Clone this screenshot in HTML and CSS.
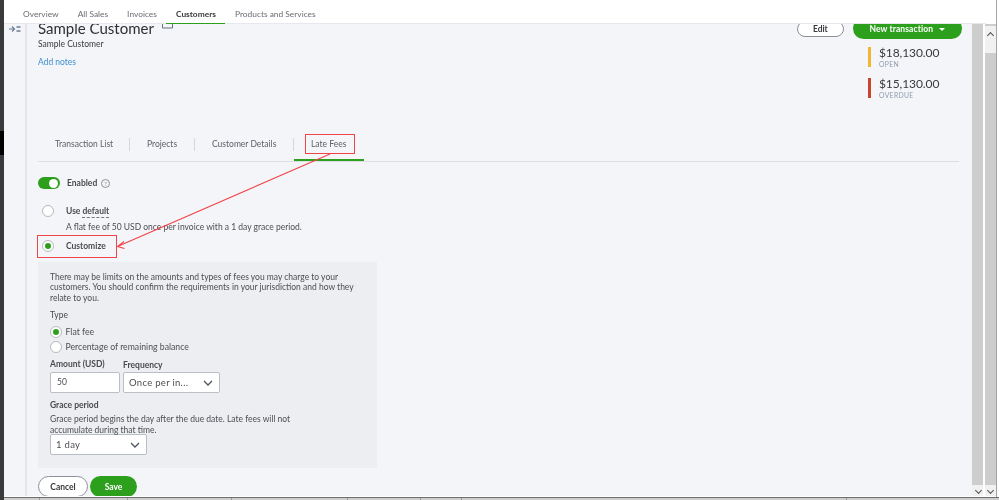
FILE: index.html
```html
<!DOCTYPE html>
<html lang="en">
<head>
<meta charset="utf-8">
<title>Sample Customer</title>
<link rel="stylesheet" href="styles.css">
</head>
<body>
<div class="window">
  <div class="edge"><span class="edge-block"></span></div>
  <div class="app">
    <nav class="topnav">
      <a>Overview</a><a>All Sales</a><a>Invoices</a><a class="active">Customers</a><a>Products and Services</a>
    </nav>
    <div class="body-row">
      <aside class="rail">
        <svg width="12" height="8" viewBox="0 0 12 8"><path d="M0 4h5M3 1.500 5.500 4 3 6.500" fill="none" stroke="#6b7f93" stroke-width="1.200"/><path d="M7.500 2h4M7.500 6h4" stroke="#6b7f93" stroke-width="1.600"/></svg>
      </aside>
      <main class="content">
        <div class="scrolled">
          <header class="cust">
            <div class="cust-left">
              <h1>Sample Customer <svg class="ext" width="11" height="9" viewBox="0 0 11 9"><path d="M.5 3v5h10V3M3 3h5" fill="none" stroke="#6b7280" stroke-width="1"/></svg></h1>
              <p class="sub">Sample Customer</p>
              <a class="link">Add notes</a>
            </div>
            <div class="cust-right">
              <div class="actions">
                <button class="btn-edit">Edit</button>
                <button class="btn-new">New transaction <i class="caret"></i></button>
              </div>
              <div class="money open"><b>$18,130.00</b><span>OPEN</span></div>
              <div class="money overdue"><b>$15,130.00</b><span>OVERDUE</span></div>
            </div>
          </header>
          <div class="tabs">
            <a>Transaction List</a><a>Projects</a><a>Customer Details</a><a class="active">Late Fees</a>
          </div>
          <div class="toggle-row">
            <span class="switch"><i></i></span><strong>Enabled</strong>
            <span class="help">?</span>
          </div>
          <div class="radio-row first"><span class="radio"></span><strong>Use <span class="dotted">default</span></strong></div>
          <p class="flat">A flat fee of 50 USD once per invoice with a 1 day grace period.</p>
          <div class="radio-row second"><span class="radio on"></span><strong>Customize</strong></div>
          <section class="panel">
            <p class="note">There may be limits on the amounts and types of fees you may charge to your customers. You should confirm the requirements in your jurisdiction and how they relate to you.</p>
            <div class="lbl type">Type</div>
            <div class="opt"><span class="radio on"></span>Flat fee</div>
            <div class="opt"><span class="radio"></span>Percentage of remaining balance</div>
            <div class="fields">
              <div class="f-amount"><div class="lbl">Amount (USD)</div><div class="input">50</div></div>
              <div class="f-freq"><div class="lbl">Frequency</div><div class="select s1">Once per in...<svg width="10" height="6" viewBox="0 0 10 6"><path d="M1 1l4 4 4-4" fill="none" stroke="#4b5563" stroke-width="1.300"/></svg></div></div>
            </div>
            <div class="lbl grace">Grace period</div>
            <p class="grace-text">Grace period begins the day after the due date. Late fees will not accumulate during that time.</p>
            <div class="select s2">1 day<svg width="10" height="6" viewBox="0 0 10 6"><path d="M1 1l4 4 4-4" fill="none" stroke="#4b5563" stroke-width="1.300"/></svg></div>
          </section>
          <div class="footer-btns"><button class="btn-cancel">Cancel</button><button class="btn-save">Save</button></div>
        </div>
      </main>
      <div class="scrollbars">
        <div class="sb"><span class="down"></span></div>
        <div class="sb"><span class="up"></span><span class="down"></span></div>
      </div>
    </div>
    <div class="taskstrip"><span class="t1"></span><span class="t2"></span><span class="t3"></span><span class="t4"></span><span class="t5"></span><span class="t6"></span><span class="t7"></span></div>
  </div>
</div>
<div class="vline"></div>
<div class="mark mark-tab"></div>
<div class="mark mark-cust"></div>
<svg class="arrow" width="999" height="500" viewBox="0 0 999 500"><path d="M330 154 117.500 246.500M124 241.500l-6.500 5 7 2" fill="none" stroke="#f0454a" stroke-width="1.100"/></svg>
</body>
</html>
```
FILE: styles.css
```css
* { box-sizing: border-box; }
html, body { margin: 0; height: 500px; overflow: hidden; background: #fff; }
body { font-family: "Lato", "Open Sans", sans-serif; font-size: 8.5px; color: #393a3d; position: relative; filter: blur(.4px); }
.window { display: flex; height: 500px; }
.edge { width: 4px; background: #3a3a3c; padding-top: 131px; flex: none; }
.edge-block { display: block; height: 24px; background: #000; }
.app { flex: 1; min-width: 0; display: flex; flex-direction: column; }
.topnav { height: 24px; flex: none; background: #fff; display: flex; padding-left: 9.500px; font-size: 8.400px; color: #6b6c72; border-bottom: 1px solid #e6e8ee; width: 982px; }
.topnav a { padding: 9px 9.500px 0; height: 25px; white-space: nowrap; }
.topnav a.active { color: #393a3d; font-weight: 700; border-bottom: 2px solid #2ca01c; }
.body-row { flex: 1; display: flex; min-height: 0; padding-bottom: 1px; }
.rail { width: 23px; flex: none; background: #f4f5f8; border-right: 2px solid #e3e5eb; padding: 1px 0 0 5px; }
.content { width: 945px; flex: none; background: #f4f5f8; overflow: hidden; }
.scrolled { margin-top: -10px; padding: 0 12px 0 11px; }
.cust { display: flex; justify-content: space-between; height: 121px; }
.cust h1 { margin: 5px 0 0; font-size: 15px; line-height: 18px; font-weight: 400; color: #2f3033; }
.ext { margin-left: 5px; vertical-align: 5px; }
.sub { margin: 1px 0 0; font-size: 8.500px; line-height: 12px; }
.link { display: block; margin-top: 6px; font-size: 8.500px; line-height: 12px; color: #3d8fd0; }
.cust-right { width: 165px; margin-right: -2px; }
.actions { display: flex; gap: 9px; justify-content: flex-end; align-items: center; height: 21px; margin-top: 4px; }
.actions button { font: inherit; padding: 0; }
.actions .btn-edit { width: 47px; height: 16px; border-radius: 8px; border: 1px solid #8d9096; background: #fff; color: #393a3d; font-weight: 700; font-size: 8.500px; }
.actions .btn-new { width: 110px; height: 21px; border-radius: 11px; border: 0; background: #2ca01c; color: #fff; font-weight: 700; font-size: 8.500px; letter-spacing: .1px; }
.caret { display: inline-block; border: 3px solid transparent; border-top: 3.500px solid #fff; border-bottom: 0; margin-left: 4px; vertical-align: 1px; }
.money { margin: 8px 0 0 71px; border-left: 3px solid #f2b632; padding-left: 8px; height: 20px; width: 90px; display: flex; flex-direction: column; gap: 2px; }
.money.overdue { border-color: #c8452c; margin-top: 11px; }
.money b { display: block; font-weight: 400; font-size: 12px; line-height: 12px; height: 12px; letter-spacing: -.1px; color: #393a3d; }
.money span { display: block; font-size: 6.800px; line-height: 6px; height: 6px; color: #8d9bb0; letter-spacing: .35px; }
.tabs { display: flex; height: 27px; border-bottom: 1px solid #dcdee3; width: 921px; align-items: flex-start; }
.tabs a { font-size: 8.500px; padding: 1px 0 0; height: 13px; line-height: 11px; color: #5e6068; margin-top: 3px; border-right: 1px solid #d5d7dc; white-space: nowrap; }
.tabs a:nth-child(1) { padding-left: 17px; width: 92px; }
.tabs a:nth-child(2) { padding-left: 17px; width: 65px; }
.tabs a:nth-child(3) { padding-left: 17px; width: 99px; }
.tabs a.active { border: 0; width: 70px; padding-left: 17px; height: 26px; margin-top: 0; padding-top: 4px; border-bottom: 2px solid #2ca01c; }
.toggle-row { display: flex; align-items: center; margin-top: 14px; height: 14px; font-size: 8.500px; }
.switch { width: 22px; height: 12px; border-radius: 6px; background: #2ca01c; display: flex; justify-content: flex-end; padding: 1.500px 2px; margin-right: 7px; }
.switch i { width: 9px; height: 9px; background: #fff; border-radius: 50%; }
.toggle-row strong { font-weight: 700; color: #4a4b50; }
.help { width: 9px; height: 9px; border: 1px solid #8d9096; border-radius: 50%; font-size: 6px; line-height: 7px; text-align: center; color: #8d9096; margin-left: 4px; }
.radio-row { display: flex; align-items: center; font-size: 8.500px; }
.radio-row strong { font-weight: 700; color: #4a4b50; }
.radio-row.first { margin: 14px 0 0 4px; height: 14px; }
.radio-row.second { margin: 6px 0 0 4px; height: 14px; }
.radio-row .radio { margin-right: 12px; }
.dotted { border-bottom: 1px dashed #777; padding-bottom: 1px; }
.flat { margin: 3px 0 0 28px; font-size: 8.500px; line-height: 12px; color: #4d4e53; }
.radio { display: inline-flex; width: 12px; height: 12px; border: 1px solid #b7b9be; border-radius: 50%; background: #fff; align-items: center; justify-content: center; flex: none; }
.radio.on::after { content: ""; width: 6px; height: 6px; background: #2ca01c; border-radius: 50%; }
.panel { width: 339px; height: 206px; margin-top: 9px; background: #edeef1; padding: 10px 12px 0; color: #4d4e53; }
.panel p { margin: 0; font-size: 8.500px; line-height: 10.400px; }
.panel .note { width: 310px; }
.lbl { font-size: 8.500px; font-weight: 700; line-height: 11px; color: #4a4b50; }
.lbl.type { margin-top: 7px; font-weight: 400; }
.opt { display: flex; align-items: center; gap: 3.500px; height: 15px; font-size: 8.700px; margin-top: 3px; }
.opt + .opt { margin-top: 0; }
.fields { display: flex; gap: 3px; margin-top: 5px; }
.f-freq .lbl { margin-top: 1px; }
.f-freq .select { margin-top: 1px; }
.input, .select { background: #fff; border: 1px solid #babec5; border-radius: 2px; color: #4d4e53; }
.input { width: 70px; height: 21px; margin-top: 2px; padding: 4px 6px; font-size: 8.500px; line-height: 11px; }
.select { display: flex; justify-content: space-between; align-items: center; font-size: 9.500px; letter-spacing: .3px; padding: 0 6px 0 5px; height: 21px; }
.s1 { width: 97px; }
.s2 { width: 97px; margin-top: -1px; }
.lbl.grace { margin-top: 7px; }
.panel .grace-text { margin-top: 3px; width: 250px; }
.footer-btns { display: flex; margin-top: 8px; gap: 2px; }
.footer-btns button { font: inherit; font-size: 8.500px; font-weight: 700; height: 21px; border-radius: 11px; padding: 0; }
.btn-cancel { width: 50px; background: #fff; border: 1px solid #8d9096; color: #393a3d; }
.btn-save { width: 47px; background: #2ca01c; border: 0; color: #fff; }
.scrollbars { display: flex; gap: 1.500px; flex: none; width: 27px; background: #fff; }
.sb { width: 11px; background: #cdcdcd; position: relative; }
.up, .down { position: absolute; left: 0; width: 100%; background: #f1f1f1; }
.up { top: 2px; height: 27px; }
.down { bottom: 0; height: 11px; }
.up::after, .down::after { content: ""; position: absolute; left: 3.500px; width: 4px; height: 4px; border: solid #505050; border-width: 0 1.200px 1.200px 0; }
.down::after { top: 2.500px; transform: rotate(45deg); }
.up::after { top: 7px; transform: rotate(225deg); }
.taskstrip { height: 3px; flex: none; background: #cfcfcf; border-top: 1px solid #6d6d6d; display: flex; }
.taskstrip span { flex: none; height: 2px; border-right: 1px solid #999; }
.t1 { width: 36px; }
.t2 { width: 88px; }
.t3 { width: 104px; }
.t4 { width: 116px; }
.t5 { width: 73px; }
.t6 { width: 41px; }
.t7 { width: 385px; }
.vline { position: absolute; left: 995.500px; top: 0; width: 1px; height: 497px; background: #a3a3a3; }
.mark { position: absolute; border: 1px solid #f0454a; }
.mark-tab { left: 305px; top: 134px; width: 50px; height: 20px; }
.mark-cust { left: 37px; top: 235px; width: 80px; height: 23px; }
.arrow { position: absolute; left: 0; top: 0; pointer-events: none; }
```
